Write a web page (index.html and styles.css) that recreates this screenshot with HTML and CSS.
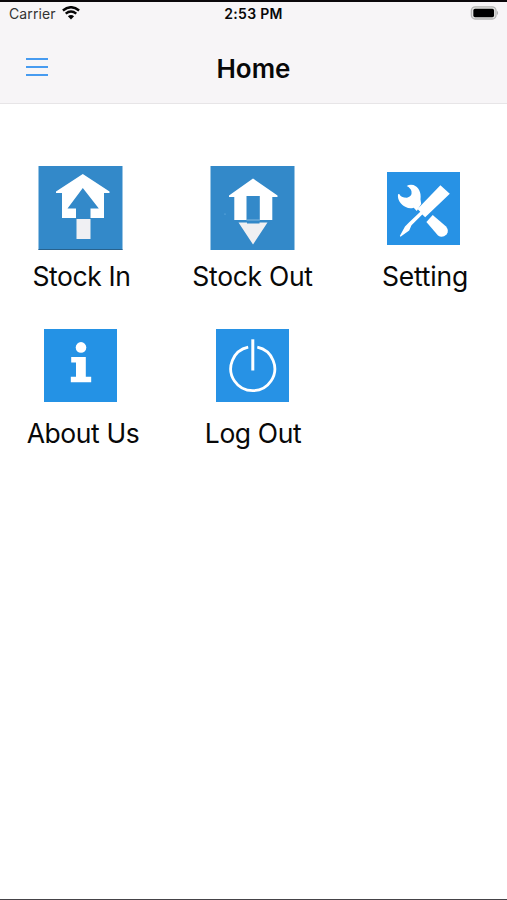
FILE: index.html
```
<!DOCTYPE html>
<html lang="en">
<head>
<meta charset="utf-8">
<title>Home</title>
<link rel="stylesheet" href="styles.css">
</head>
<body>
<div class="screen">
  <header class="header">
    <div class="status">
      <div class="carrier"><span>Carrier</span>
        <svg class="wifi" width="18" height="14" viewBox="0 0 18 14"><path d="M.9 4.5Q9-2.1 17.1 4.5M3.7 7.6Q9 3.4 14.3 7.6" fill="none" stroke="#050505" stroke-width="2.4"/><path d="M5.9 10.2Q9 7.7 12.1 10.2L9 13.4Z" fill="#050505"/></svg>
      </div>
      <time class="time">2:53 PM</time>
      <svg class="battery" width="30" height="14" viewBox="0 0 31 15"><rect x=".9" y=".9" width="26.4" height="13" rx="4" fill="#e4e4e3" stroke="#b5b5b4" stroke-width="1.4"/><rect x="3" y="3" width="22.2" height="9" rx="1.8" fill="#000"/><path d="M28.4 5q2.3 2.4 0 4.8z" fill="#aaa"/></svg>
    </div>
    <nav class="navbar">
      <button class="menu" aria-label="Menu"><svg width="22" height="20" viewBox="0 0 22 20"><path d="M0 2H22M0 10H22M0 18H22" stroke="#479bf0" stroke-width="1.9"/></svg></button>
      <h1 class="title">Home</h1>
    </nav>
  </header>
  <main class="grid">
    <a class="tile">
      <svg class="icon large" viewBox="0 0 84 84"><rect width="84" height="84" fill="#3389c9"/><path d="M0 83.5H84" stroke="#28628e"/><path d="M44.3 8 71 25.5V27H65.5V52H23.5V27H17.5V25.5Z" fill="#fff"/><path d="M44.3 22 60.3 42.5H52V52H37.5V42.5H29Z" fill="#3389c9"/><path d="M38 53H52V73H38Z" fill="#f0f0f3"/></svg>
      <span class="label stock-in">Stock In</span>
    </a>
    <a class="tile">
      <svg class="icon large" viewBox="0 0 84 84"><rect width="84" height="84" fill="#3389c9"/><path d="M42.5 12.5 67 29.5V31H61.8V54H49.3V30H36V54H23.8V31H18.5V29.5Z" fill="#fff"/><path d="M36 54H49.3" stroke="#a9cee8" stroke-width=".7"/><path d="M28 56.5H36.5V57.5H49V56.5H57L42.5 78.5Z" fill="#f0f0f2"/><circle cx="14.5" cy="48" r=".6" fill="#7dbbe7"/></svg>
      <span class="label stock-out">Stock Out</span>
    </a>
    <a class="tile setting-tile">
      <svg class="icon" viewBox="0 0 73 73"><rect width="73" height="73" fill="#2792e5"/><g fill="#fff"><path d="M19.7 14Q22.5 12 26.5 13C31.5 15 34.5 20 33.5 27.5L34.2 32 29.8 39 26.7 35.7Q22.5 37 18.7 35C13.5 32.5 10.3 28 11 22.3L12.3 22Q13.5 25.7 20 25.7 25.3 24.5 24.5 19.5 23.8 16 19.7 14Z"/><path d="M53.4 13.2 62.8 21.8 38.2 45.2 35.3 42.4 24.5 53.2 22.2 58.4 13.5 64.8 12.8 64 18 54.4 22.2 50.2 33.3 39.8 30.5 37Z"/><path d="M45.7 43 58.8 54.3Q62.8 58.6 59.5 62.4 55.2 66.7 51 63.4L39.4 50Z"/></g></svg>
      <span class="label setting">Setting</span>
    </a>
    <a class="tile">
      <svg class="icon" viewBox="0 0 73 73"><rect width="73" height="73" fill="#2492e5"/><g fill="#fff"><circle cx="37" cy="18.4" r="5.3"/><path d="M27.2 28H41.8V47.8H47.2V53.2H26.8V47.8H32V33.5H27.2Z"/></g></svg>
      <span class="label about">About Us</span>
    </a>
    <a class="tile">
      <svg class="icon" viewBox="0 0 73 73"><rect width="73" height="73" fill="#2792e5"/><path d="M32.2 18.2A22 22 0 1 0 41.3 18.2" fill="none" stroke="#fff" stroke-width="2.8"/><path d="M36.8 10.3V41.5" stroke="#fff" stroke-width="3"/></svg>
      <span class="label logout">Log Out</span>
    </a>
  </main>
</div>
</body>
</html>
```
FILE: styles.css
```
* { box-sizing: border-box; }
body { margin: 0; background: #fff; color: #080808; font-family: Inter, "Liberation Sans", sans-serif; }
.screen { height: 900px; border-top: 2px solid #0b080b; border-bottom: 1px solid #454347; }
.header { height: 102px; background: #f7f5f7; border-bottom: 1px solid #e7e5e7; }
.status { height: 23px; padding: 0 7px 0 9px; display: grid; grid-template-columns: 1fr auto 1fr; align-items: center; }
.carrier { display: flex; align-items: center; gap: 6px; font-size: 14px; color: #333; }
.carrier span { letter-spacing: .1px; }
.wifi { margin-top: -1px; }
.time { margin-right: 2px; font-size: 14px; line-height: 23px; font-weight: 600; letter-spacing: .3px; }
.battery { justify-self: end; margin-top: -1px; }
.navbar { height: 78px; display: grid; grid-template-columns: 100px 1fr 100px; align-items: center; }
.menu { margin: 5px 0 0 26px; padding: 0; border: 0; background: none; display: flex; }
.title { margin: 9px 0 0; text-align: center; font-size: 26px; line-height: 30px; font-weight: 600; }
.grid { display: grid; grid-template-columns: 161px 162px 161px; column-gap: 10px; grid-template-rows: 163px 130px; padding-top: 62px; }
.tile { display: flex; flex-direction: column; align-items: center; }
.icon { width: 73px; height: 73px; display: block; }
.icon.large { width: 85px; height: 84px; }
.label { font-size: 26.5px; line-height: 34px; white-space: nowrap; }
.large + .label { margin-top: 9px; }
.stock-in { padding-left: 2px; letter-spacing: -.4px; }
.stock-out { padding-left: 1px; letter-spacing: -.3px; }
.setting-tile { padding-top: 6px; }
.setting { margin-top: 14px; padding-left: 3px; letter-spacing: -.2px; }
.about, .logout { margin-top: 14px; }
.about { padding-left: 5px; letter-spacing: -.4px; }
.logout { padding-left: 2px; letter-spacing: -.4px; }
```
